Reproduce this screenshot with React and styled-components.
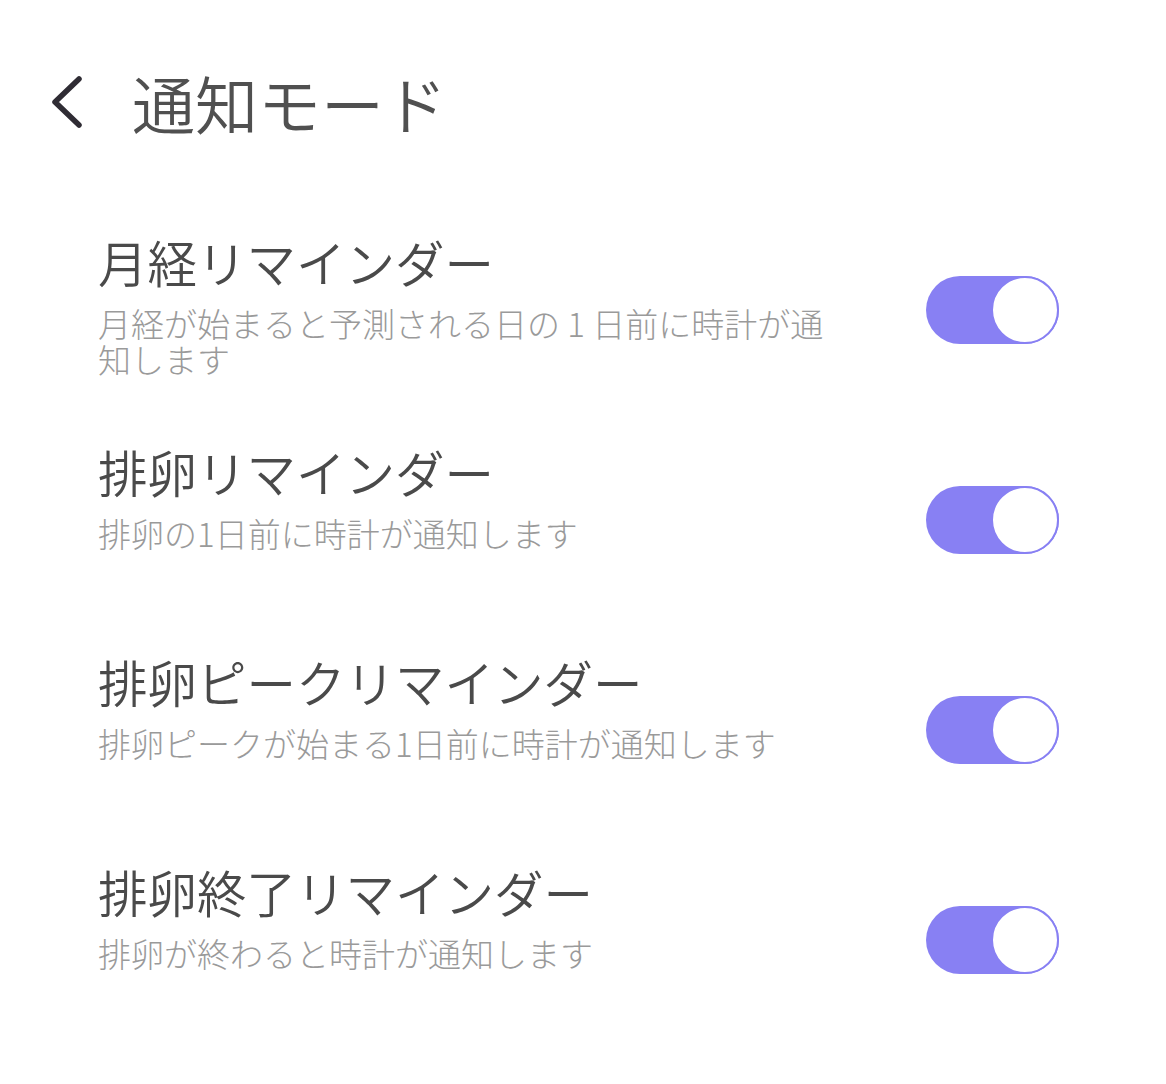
import React, { useState } from "react";
import styled, { createGlobalStyle } from "styled-components";

const GlobalStyle = createGlobalStyle`
  html, body {
    margin: 0;
    padding: 0;
    background: #ffffff;
  }
  body {
    font-family: "Noto Sans CJK JP", "Noto Sans", sans-serif;
  }
`;

const Page = styled.div`
  width: 1166px;
  min-height: 1084px;
  background: #ffffff;
  box-sizing: border-box;
  padding: 67px 107px 0 0;
`;

const Header = styled.div`
  display: flex;
  align-items: center;
  height: 70px;
  padding-left: 48px;
  gap: 46px;
`;

const BackButton = styled.button`
  display: flex;
  align-items: center;
  justify-content: center;
  width: 38px;
  height: 56px;
  padding: 0;
  border: none;
  background: none;
  cursor: pointer;
`;

const HeaderTitle = styled.h1`
  margin: 0;
  font-size: 63px;
  font-weight: 350;
  line-height: 70px;
  color: #505050;
`;

const List = styled.div`
  display: flex;
  flex-direction: column;
  margin-top: 97px;
  padding-left: 98px;
`;

const Row = styled.div`
  display: flex;
  align-items: flex-start;
  justify-content: space-between;
  height: 210px;
`;

const TextBlock = styled.div`
  display: flex;
  flex-direction: column;
  max-width: 745px;
`;

const Title = styled.div`
  font-size: 49.5px;
  font-weight: 350;
  line-height: 56px;
  color: #4a4a4a;
  white-space: nowrap;
`;

const Sub = styled.div`
  margin-top: 15px;
  font-size: 33px;
  font-weight: 300;
  line-height: 36px;
  color: #9a9a9a;
`;

const Track = styled.button`
  position: relative;
  flex-shrink: 0;
  margin-top: 42px;
  width: 133px;
  height: 68px;
  padding: 0;
  border: none;
  border-radius: 34px;
  background: ${(p) => (p.$on ? "#8880f3" : "#d9d9de")};
  cursor: pointer;
`;

const Thumb = styled.span`
  position: absolute;
  top: 0;
  left: ${(p) => (p.$on ? "65px" : "0")};
  width: 68px;
  height: 68px;
  box-sizing: border-box;
  border-radius: 50%;
  border: 2px solid ${(p) => (p.$on ? "#8880f3" : "#d9d9de")};
  background: #ffffff;
`;

const items = [
  {
    title: "月経リマインダー",
    sub: "月経が始まると予測される日の 1 日前に時計が通知します",
  },
  { title: "排卵リマインダー", sub: "排卵の1日前に時計が通知します" },
  {
    title: "排卵ピークリマインダー",
    sub: "排卵ピークが始まる1日前に時計が通知します",
  },
  { title: "排卵終了リマインダー", sub: "排卵が終わると時計が通知します" },
];

const Toggle = ({ on, onClick }) => (
  <Track $on={on} onClick={onClick} aria-pressed={on}>
    <Thumb $on={on} />
  </Track>
);

export default function App() {
  const [state, setState] = useState(items.map(() => true));

  const flip = (i) =>
    setState((s) => s.map((v, j) => (j === i ? !v : v)));

  return (
    <>
      <GlobalStyle />
      <Page>
        <Header>
          <BackButton aria-label="back">
            <svg width="38" height="56" viewBox="0 0 38 56">
              <path
                d="M31 5 L7 28 L31 51"
                fill="none"
                stroke="#2f2c34"
                strokeWidth="5.5"
                strokeLinecap="round"
                strokeLinejoin="round"
              />
            </svg>
          </BackButton>
          <HeaderTitle>通知モード</HeaderTitle>
        </Header>
        <List>
          {items.map((it, i) => (
            <Row key={it.title}>
              <TextBlock>
                <Title>{it.title}</Title>
                <Sub>{it.sub}</Sub>
              </TextBlock>
              <Toggle on={state[i]} onClick={() => flip(i)} />
            </Row>
          ))}
        </List>
      </Page>
    </>
  );
}
